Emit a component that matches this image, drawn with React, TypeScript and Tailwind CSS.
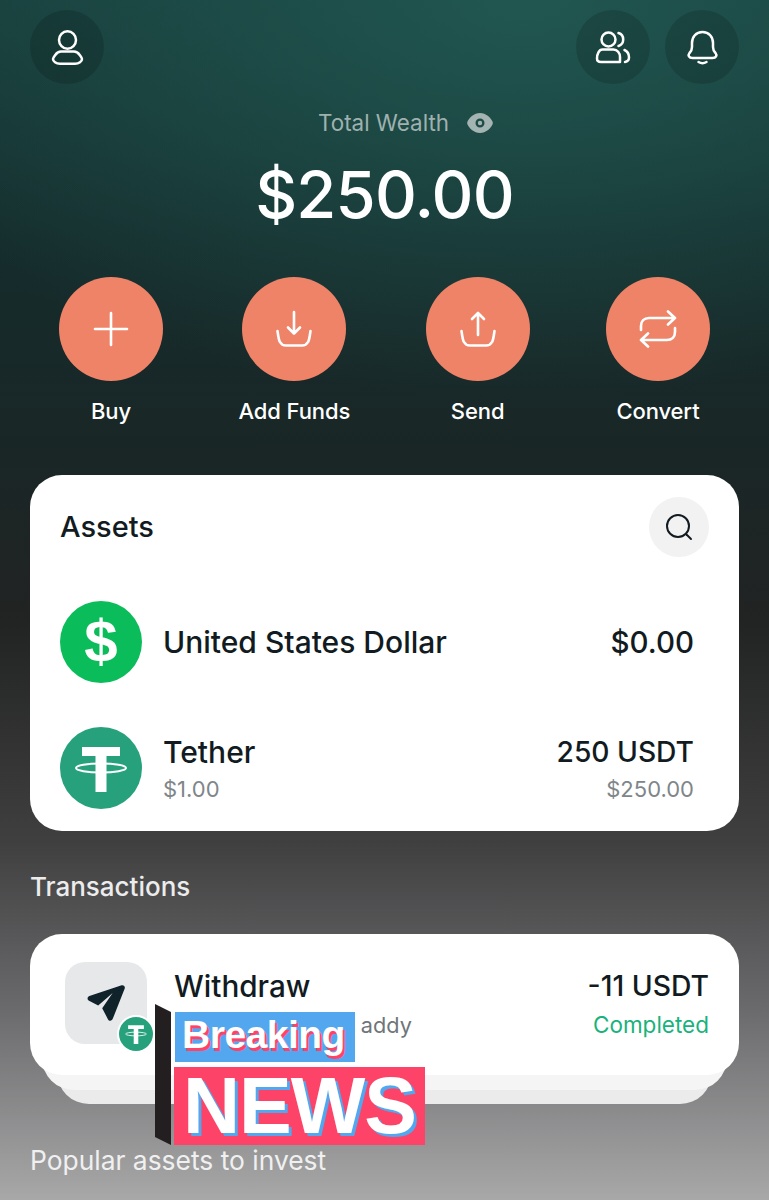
import React from 'react';

const stroke = { fill: 'none', stroke: 'currentColor', strokeLinecap: 'round', strokeLinejoin: 'round' } as const;

const UserIcon = () => (
  <svg width="33" height="35" viewBox="0 0 33 35" {...stroke} strokeWidth="2.500">
    <ellipse cx="16.500" cy="10" rx="8.500" ry="8.700" />
    <path d="M10 21.500h13c2.500 0 4 1 5.500 3.200 1.200 1.800 2.500 3.200 2.500 4.300 0 2.500-3 4.700-7 4.700H9c-4 0-7-2.200-7-4.700 0-1.100 1.300-2.500 2.500-4.300C6 22.500 7.500 21.500 10 21.500z" />
  </svg>
);

const UsersIcon = () => (
  <svg width="36" height="33" viewBox="0 0 36 33" {...stroke} strokeWidth="2.500">
    <ellipse cx="13.500" cy="8.500" rx="7" ry="7" />
    <path d="M23.500 2c2.800.8 4.700 3.300 4.700 6.500s-1.900 5.700-4.700 6.500" />
    <path d="M7.500 18.500h11c3.800 0 6.500 3.500 6.500 7.500v5H6c-2.500 0-4-1.500-4-3.500 0-4.500 2-9 5.500-9z" />
    <path d="M29.500 19c3 1.300 4.500 4.500 4.500 7.500 0 2.500-1.200 4-4 4.500" />
  </svg>
);

const BellIcon = () => (
  <svg width="33" height="35" viewBox="0 0 33 35" {...stroke} strokeWidth="2.500">
    <path d="M16.500 2C10 2 6 7 6 13v4c0 3-1 4.500-2.500 6C1.500 25.500 3 28 6.500 28h20c3.500 0 5-2.500 3-5-1.500-1.500-2.500-3-2.500-6v-4C27 7 23 2 16.500 2z" />
    <path d="M12.500 32c2.600 1.500 5.400 1.500 8 0" />
  </svg>
);

const EyeIcon = () => (
  <svg width="26" height="20" viewBox="0 0 26 20">
    <path fillRule="evenodd" fill="#a3b4b2" d="M13 0c6 0 10.500 4.500 12.500 8.500.5 1 .5 2 0 3C23.500 15.500 19 20 13 20S2.500 15.500.5 11.500c-.5-1-.5-2 0-3C2.500 4.500 7 0 13 0zm0 5.500a4.500 4.500 0 1 0 0 9 4.500 4.500 0 0 0 0-9z" />
    <circle cx="13" cy="10" r="2.200" fill="#a3b4b2" />
  </svg>
);

const PlusIcon = () => (
  <svg width="36" height="36" viewBox="0 0 36 36" {...stroke} strokeWidth="2.600">
    <path d="M18 2v32M2 18h32" />
  </svg>
);

const TrayDownIcon = () => (
  <svg width="38" height="38" viewBox="0 0 38 38" {...stroke} strokeWidth="2.600">
    <path d="M19 2v21M13 17.500l6 6 6-6" />
    <path d="M2.500 21c.8 5 1 8.500 2.500 11 1.200 2.200 3 3.500 6 3.500h16c3 0 4.800-1.300 6-3.500 1.500-2.500 1.700-6 2.500-11" />
  </svg>
);

const TrayUpIcon = () => (
  <svg width="38" height="38" viewBox="0 0 38 38" {...stroke} strokeWidth="2.600">
    <path d="M19 25V3M13 9l6-6 6 6" />
    <path d="M2.500 21c.8 5 1 8.500 2.500 11 1.200 2.200 3 3.500 6 3.500h16c3 0 4.800-1.300 6-3.500 1.500-2.500 1.700-6 2.500-11" />
  </svg>
);

const ConvertIcon = () => (
  <svg width="38" height="38" viewBox="0 0 38 38" {...stroke} strokeWidth="2.600">
    <path d="M2 20v-4c0-5 3-8 8-8h26M29 1.500 36 8l-7 6.500" />
    <path d="M36 18v4c0 5-3 8-8 8H2M9 23.500 2 30l7 6.500" />
  </svg>
);

const SearchIcon = () => (
  <svg width="28" height="28" viewBox="0 0 28 28" fill="none" stroke="#111b21" strokeWidth="2" strokeLinecap="round">
    <circle cx="13" cy="13" r="11" />
    <path d="M21.500 21.500 26 26" />
  </svg>
);

const TetherGlyph = ({ size }: { size: number }) => (
  <svg width={size} height={size} viewBox="0 0 82 82">
    <circle cx="41" cy="41" r="41" fill="#27a17c" />
    <path fill="#fff" d="M22 20h38v9H46.500v36h-11V29H22z" />
    <ellipse cx="41" cy="41" rx="25" ry="4.500" fill="none" stroke="#fff" strokeWidth="2" />
  </svg>
);

const DollarBadge = () => (
  <div className="flex h-[82px] w-[82px] shrink-0 items-center justify-center rounded-full bg-[#0bbd5a]">
    <span className="text-[60px] leading-none font-bold text-white [font-family:'Liberation_Sans',sans-serif]">$</span>
  </div>
);

const PlaneIcon = () => (
  <svg width="38" height="38" viewBox="0 0 40 38">
    <path fill="#10232b" d="M36.500.3 2.500 11.600c-2.300.8-2.600 3.800-.4 5l9.700 5L27 8.500 16 24.500l6 11.500c1.200 2.300 4.300 2.100 5.100-.3L39.700 3.800c.7-2.200-1.100-4.100-3.200-3.500z" />
  </svg>
);

const actions = [
  { label: 'Buy', icon: <PlusIcon />, width: 'w-[104px]' },
  { label: 'Add Funds', icon: <TrayDownIcon />, width: 'w-[110px]' },
  { label: 'Send', icon: <TrayUpIcon />, width: 'w-[104px]' },
  { label: 'Convert', icon: <ConvertIcon />, width: 'w-[104px]' },
];

const BreakingNews = () => (
  <div className="absolute top-[1004px] left-[155px] h-[141px] w-[270px] [font-family:'Liberation_Sans',sans-serif]">
    <svg className="absolute top-0 left-0" width="16" height="141" viewBox="0 0 16 141">
      <path fill="#231f20" d="M0 0 16 8v133L0 133z" />
    </svg>
    <div className="absolute top-[8px] left-[20px] flex h-[50px] w-[180px] items-center justify-center bg-[#53a7ee] pr-[3px] pb-[4px] text-[39px] font-bold tracking-[-0.5px] text-white [text-shadow:2px_3px_0_#ff4266]">
      Breaking
    </div>
    <div className="absolute top-[63px] left-[19px] flex h-[78px] w-[251px] items-center justify-center bg-[#fd4468] text-[79px] font-bold tracking-[-1px] text-white [text-shadow:3px_3px_0_#53a7ee]">
      NEWS
    </div>
  </div>
);

export default function App() {
  return (
    <div className="relative h-[1200px] w-[769px] overflow-hidden bg-[radial-gradient(ellipse_720px_400px_at_68%_0%,#215650_0%,rgba(32,84,78,0)_100%),linear-gradient(180deg,#173c3a_0%,#152c2c_20%,#1a2626_38%,#222323_52%,#3f3f40_70%,#6a6a6c_84%,#a8a8a9_100%)] [font-family:Inter,sans-serif]">
      <div className="flex items-start justify-between px-[30px] pt-[10px]">
        <button className="flex h-[74px] w-[74px] items-center justify-center rounded-full bg-black/15 text-white">
          <UserIcon />
        </button>
        <div className="flex gap-[15px]">
          <button className="flex h-[74px] w-[74px] items-center justify-center rounded-full bg-black/15 text-white">
            <UsersIcon />
          </button>
          <button className="flex h-[74px] w-[74px] items-center justify-center rounded-full bg-black/15 text-white">
            <BellIcon />
          </button>
        </div>
      </div>

      <div className="mt-[24px] flex items-center justify-center gap-[18px] pl-[42px]">
        <span className="text-[22.4px] leading-[30px] text-[#9fb1af]">Total Wealth</span>
        <EyeIcon />
      </div>
      <div className="mt-[17px] text-center text-[65px] leading-[80px] font-medium tracking-[-0.8px] text-white">$250.00</div>

      <div className="mt-[42px] flex justify-between px-[59px]">
        {actions.map((a) => (
          <div key={a.label} className={`flex ${a.width} flex-col items-center`}>
            <div className="flex h-[104px] w-[104px] items-center justify-center rounded-full bg-[#ef8368] text-white">{a.icon}</div>
            <span className="mt-[15px] text-[22px] leading-[30px] font-medium tracking-[-0.1px] whitespace-nowrap text-white">{a.label}</span>
          </div>
        ))}
      </div>

      <div className="mx-[30px] mt-[49px] h-[356px] rounded-[32px] bg-white pt-[22px] pr-[45px] pl-[30px]">
        <div className="-mr-[15px] flex items-center justify-between">
          <span className="text-[29px] leading-[60px] font-medium text-[#111b21]">Assets</span>
          <div className="flex h-[60px] w-[60px] items-center justify-center rounded-full bg-[#f2f2f2]">
            <SearchIcon />
          </div>
        </div>
        <div className="mt-[44px] flex h-[82px] items-center gap-[22px]">
          <DollarBadge />
          <span className="-ml-px flex-1 text-[30px] font-medium text-[#111b21]">United States Dollar</span>
          <span className="text-[29.500px] font-medium text-[#111b21]">$0.00</span>
        </div>
        <div className="mt-[44px] flex h-[82px] items-center gap-[22px]">
          <TetherGlyph size={82} />
          <div className="-ml-px flex-1">
            <div className="text-[30px] leading-[36px] font-medium text-[#111b21]">Tether</div>
            <div className="mt-[5px] text-[22px] leading-[28px] text-[#7f868a]">$1.00</div>
          </div>
          <div className="text-right">
            <div className="text-[28.200px] leading-[36px] font-medium text-[#111b21]">250 USDT</div>
            <div className="mt-[5px] text-[22px] leading-[28px] text-[#7f868a]">$250.00</div>
          </div>
        </div>
      </div>

      <div className="mt-[38px] ml-[30px] text-[26px] leading-[36px] font-medium text-[#ececec]">Transactions</div>

      <div className="relative mx-[30px] mt-[29px] h-[170px]">
        <div className="absolute top-[60px] right-[27px] left-[27px] h-[110px] rounded-[32px] bg-[#ebebeb]" />
        <div className="absolute top-[40px] right-[12px] left-[12px] h-[116px] rounded-[32px] bg-[#f5f5f5]" />
        <div className="absolute inset-x-0 top-0 flex h-[141px] items-start gap-[28px] rounded-[32px] bg-white pt-[28px] pr-[30px] pl-[35px]">
          <div className="relative h-[82px] w-[82px] shrink-0 rounded-[20px] bg-[#e7e8ea]">
            <div className="flex h-full items-center justify-center">
              <PlaneIcon />
            </div>
            <div className="absolute top-[53px] left-[52px] rounded-full bg-white p-[2px]">
              <TetherGlyph size={34} />
            </div>
          </div>
          <div className="flex-1">
            <div className="-ml-px text-[29.700px] leading-[48px] font-medium text-[#111b21]">Withdraw</div>
            <div className="-ml-px text-[21.700px] leading-[30px] text-[#6f7579]">Sending to wrong addy</div>
          </div>
          <div className="text-right">
            <div className="text-[28.300px] leading-[48px] font-medium text-[#111b21]">-11 USDT</div>
            <div className="text-[22.500px] leading-[30px] text-[#19b27c]">Completed</div>
          </div>
        </div>
      </div>

      <div className="mt-[38px] ml-[30px] text-[26.400px] leading-[36px] text-[#f0f0f0]">Popular assets to invest</div>

      <BreakingNews />
    </div>
  );
}
